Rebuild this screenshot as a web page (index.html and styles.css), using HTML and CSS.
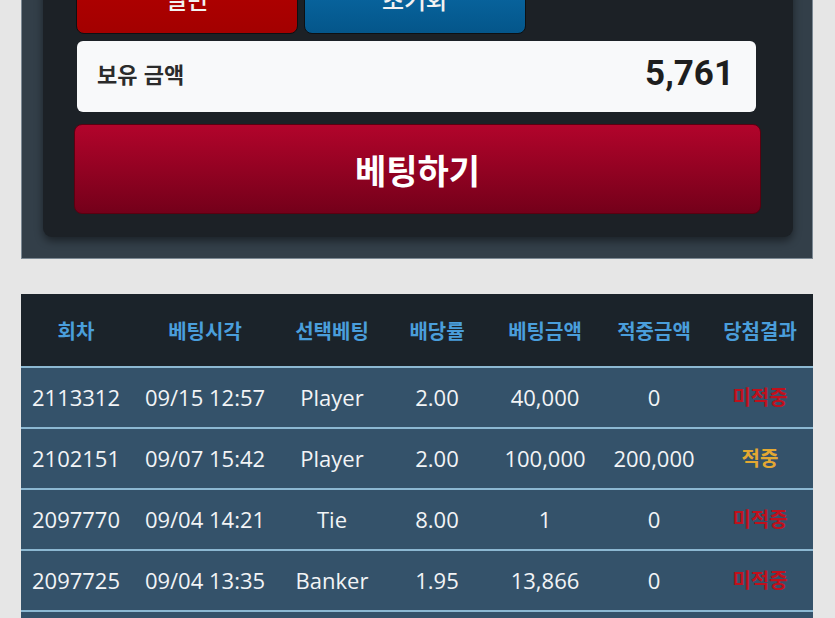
FILE: index.html
```html
<!DOCTYPE html>
<html lang="ko">
<head>
    <meta charset="UTF-8">
    <meta name="viewport" content="width=device-width, initial-scale=1.0">
    <title>베팅</title>
    <link rel="stylesheet" href="styles.css">
</head>
<body>

    <div class="page">
        <div class="bet-panel">
            <div class="bet-box">
                <div class="top-buttons">
                    <button class="mode-btn">일반</button>
                    <button class="reset-btn">초기화</button>
                </div>

                <div class="balance">
                    <span class="balance-label">보유 금액</span>
                    <span class="balance-value">5,761</span>
                </div>

                <button class="bet-btn">베팅하기</button>
            </div>
        </div>

        <div class="history">
            <table class="history-table">
                <colgroup>
                    <col class="c-round">
                    <col class="c-time">
                    <col class="c-pick">
                    <col class="c-odds">
                    <col class="c-amount">
                    <col class="c-win">
                    <col class="c-result">
                </colgroup>
                <thead>
                    <tr>
                        <th>회차</th>
                        <th>베팅시각</th>
                        <th>선택베팅</th>
                        <th>배당률</th>
                        <th>베팅금액</th>
                        <th>적중금액</th>
                        <th>당첨결과</th>
                    </tr>
                </thead>
                <tbody>
                    <tr>
                        <td>2113312</td>
                        <td>09/15 12:57</td>
                        <td>Player</td>
                        <td>2.00</td>
                        <td>40,000</td>
                        <td>0</td>
                        <td class="lose">미적중</td>
                    </tr>
                    <tr>
                        <td>2102151</td>
                        <td>09/07 15:42</td>
                        <td>Player</td>
                        <td>2.00</td>
                        <td>100,000</td>
                        <td>200,000</td>
                        <td class="win">적중</td>
                    </tr>
                    <tr>
                        <td>2097770</td>
                        <td>09/04 14:21</td>
                        <td>Tie</td>
                        <td>8.00</td>
                        <td>1</td>
                        <td>0</td>
                        <td class="lose">미적중</td>
                    </tr>
                    <tr>
                        <td>2097725</td>
                        <td>09/04 13:35</td>
                        <td>Banker</td>
                        <td>1.95</td>
                        <td>13,866</td>
                        <td>0</td>
                        <td class="lose">미적중</td>
                    </tr>
                    <tr>
                        <td>2097710</td>
                        <td>09/04 13:20</td>
                        <td>Player</td>
                        <td>2.00</td>
                        <td>10,000</td>
                        <td>0</td>
                        <td class="lose">미적중</td>
                    </tr>
                </tbody>
            </table>
        </div>
    </div>

</body>
</html>
```

FILE: styles.css
```css
body {
    margin: 0;
    padding: 0;
    background-color: #e6e6e6;
    font-family: 'Open Sans', 'Noto Sans CJK KR', sans-serif;
    overflow: hidden;
}
.page {
    width: 792px;
    margin-left: 21px;
}
.bet-panel {
    margin-top: -68px;
    padding: 20px 19px 21px 21px;
    background-color: #333f49;
    border: 1px solid #7b8893;
    border-top: none;
}
.bet-box {
    background-color: #1c2126;
    border-radius: 9px;
    box-shadow: 0 4px 8px rgba(0, 0, 0, 0.45);
    padding: 10px 32px 23px 31px;
}
.top-buttons {
    display: flex;
    gap: 6px;
    margin-left: 2px;
}
.top-buttons button {
    width: 222px;
    height: 72px;
    border: 1px solid #0d1013;
    border-radius: 8px;
    color: #f2f2f2;
    font-family: 'Noto Sans CJK KR', sans-serif;
    font-size: 24px;
    font-weight: 500;
}
.mode-btn {
    background: linear-gradient(#b50000, #a30000);
}
.reset-btn {
    background: linear-gradient(#0b6fae, #04568a);
}
.balance {
    display: flex;
    justify-content: space-between;
    align-items: center;
    height: 71px;
    margin: 7px 5px 0 3px;
    padding: 0 22px 7px 20px;
    background-color: #f8f9fa;
    border-radius: 6px;
    box-sizing: border-box;
}
.balance-label {
    font-family: 'Noto Sans CJK KR', sans-serif;
    font-size: 22px;
    font-weight: bold;
    color: #2b2b2b;
}
.balance-value {
    font-family: 'Roboto', sans-serif;
    font-size: 35px;
    font-weight: bold;
    color: #1e1e1e;
}
.bet-btn {
    display: block;
    width: 100%;
    height: 90px;
    margin-top: 12px;
    border: 1px solid #5a0010;
    border-radius: 8px;
    background: linear-gradient(#b2042b, #74001a);
    color: #ffffff;
    font-family: 'Noto Sans CJK KR', sans-serif;
    font-size: 34px;
    font-weight: bold;
}
.history {
    margin-top: 35px;
}
.history-table {
    width: 100%;
    border-collapse: collapse;
    table-layout: fixed;
}
.c-round { width: 110px; }
.c-time { width: 148px; }
.c-pick { width: 106px; }
.c-odds { width: 104px; }
.c-amount { width: 112px; }
.c-win { width: 106px; }
.c-result { width: 106px; }
th {
    height: 72px;
    padding: 0;
    background-color: #1b232a;
    color: #4a9edb;
    font-family: 'Noto Sans CJK KR', sans-serif;
    font-size: 20px;
    font-weight: bold;
    text-align: center;
}
td {
    height: 57px;
    padding: 0 0 2px;
    background-color: #34526a;
    border-top: 2px solid #8cb8d2;
    color: #f2f4f6;
    font-size: 22px;
    text-align: center;
    white-space: nowrap;
}
td.lose {
    color: #c0101c;
    font-family: 'Noto Sans CJK KR', sans-serif;
    font-size: 20px;
    font-weight: bold;
}
td.win {
    color: #e3a832;
    font-family: 'Noto Sans CJK KR', sans-serif;
    font-size: 20px;
    font-weight: bold;
}
```
